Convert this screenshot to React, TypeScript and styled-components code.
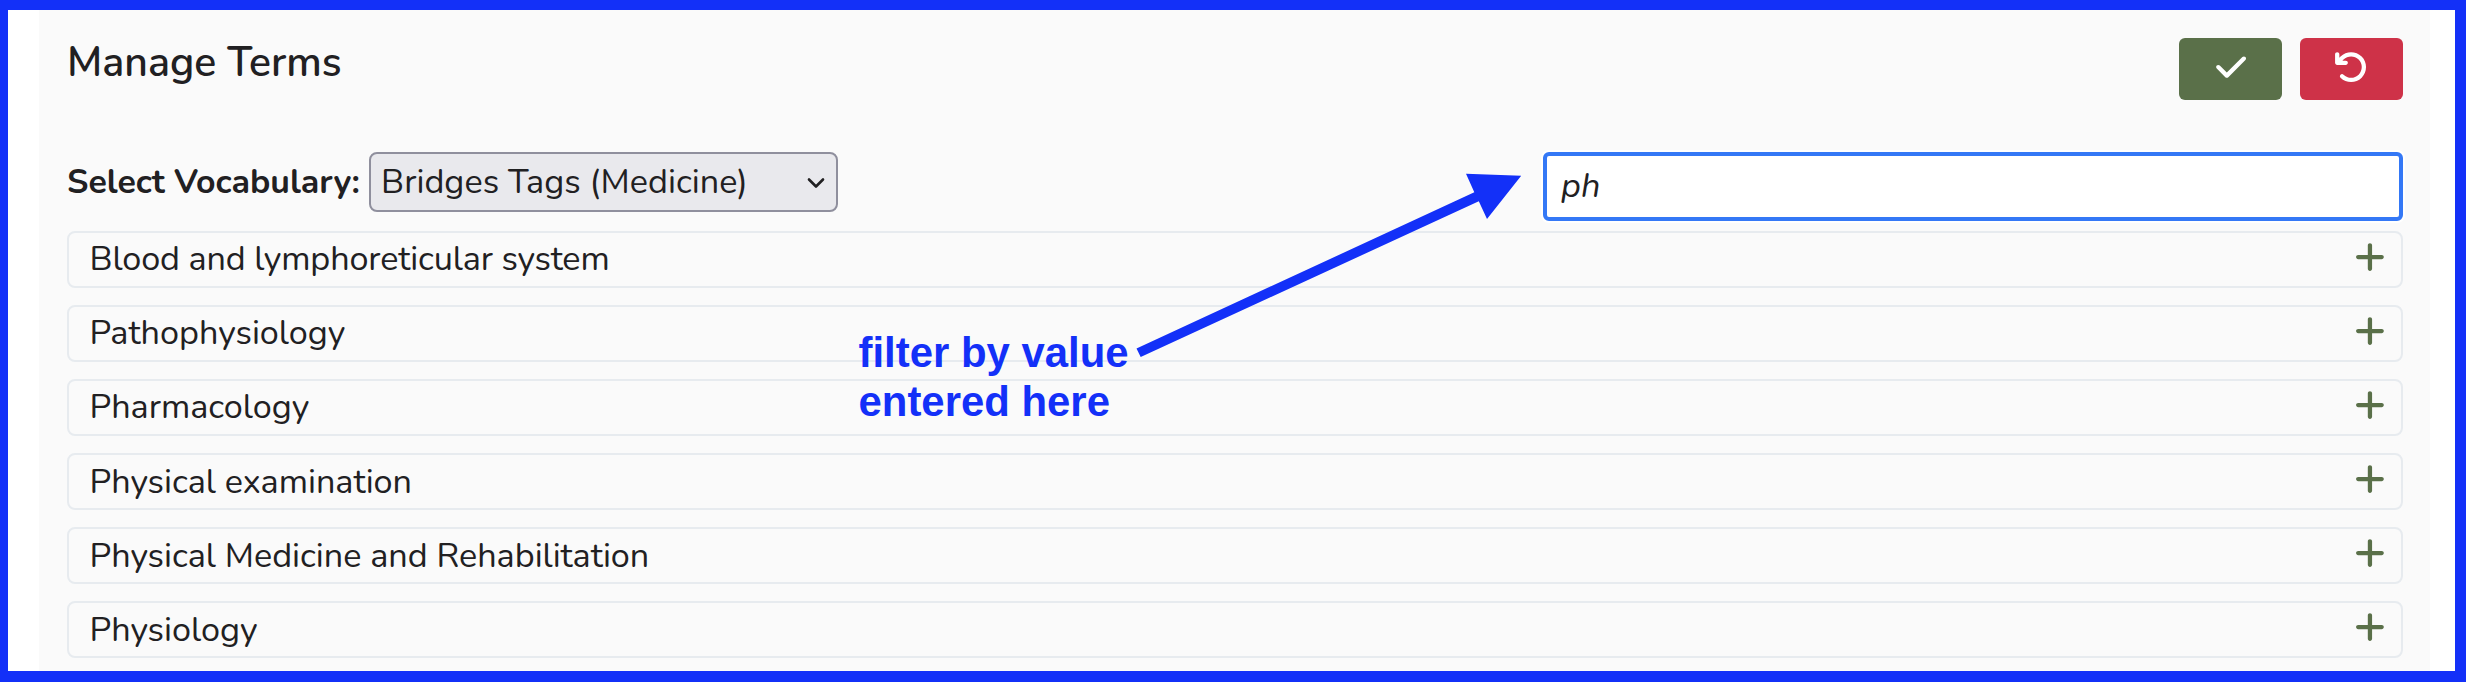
import React, { useState } from "react";
import styled, { createGlobalStyle } from "styled-components";
import { FaArrowRotateLeft, FaCheck, FaPlus } from "react-icons/fa6";

const GlobalStyle = createGlobalStyle`
  *, *::before, *::after { box-sizing: border-box; }
  body {
    margin: 0;
    background: #fff;
    color: #212022;
    font-family: "Nunito", "Lato", "Open Sans", sans-serif;
    font-size: 34.2px;
  }
`;

const Frame = styled.div`
  position: relative;
  height: 682px;
  overflow: hidden;
  border: solid #1330f8;
  border-width: 10px 11px 11px 8px;
  padding: 0 25px 0 31px;
`;

const Panel = styled.main`
  height: 100%;
  padding: 28px 27px 0 28px;
  background: #fafafa;
`;

const Header = styled.header`
  display: flex;
  justify-content: space-between;
  align-items: flex-start;
  height: 114px;
`;

const Title = styled.h1`
  margin: 0;
  padding-top: 1px;
  font-size: 41px;
  font-weight: 600;
  line-height: 48px;
`;

const Actions = styled.div`
  display: flex;
  gap: 18px;
`;

const ActionButton = styled.button<{ $tone: "save" | "undo" }>`
  display: flex;
  align-items: center;
  justify-content: center;
  width: 103px;
  height: 62px;
  padding: ${({ $tone }) => ($tone === "save" ? "0 0 4px 1px" : "0 0 4px")};
  border: 0;
  border-radius: 6px;
  background: ${({ $tone }) => ($tone === "save" ? "#5a7049" : "#ce3248")};
  color: #fff;

  svg {
    width: 34.2px;
    height: 34.2px;
  }
`;

const Filters = styled.div`
  display: flex;
  justify-content: space-between;
  align-items: flex-start;
  height: 79px;
`;

const Vocabulary = styled.label`
  display: flex;
  align-items: center;
  gap: 9px;
  height: 60px;
`;

const LabelText = styled.span`
  width: 293px;
  font-size: 33.9px;
  font-weight: 700;
  line-height: 60px;
  white-space: nowrap;
`;

const SelectBox = styled.span`
  display: grid;
  grid-template-rows: 60px;
  align-items: center;
  width: 469px;

  > * {
    grid-area: 1 / 1;
  }
`;

const Select = styled.select`
  appearance: none;
  width: 100%;
  height: 60px;
  padding: 0 48px 2px 10px;
  border: 2px solid #8f8f9d;
  border-radius: 8px;
  background: #e9e9ed;
  color: inherit;
  font: inherit;
  line-height: normal;
  letter-spacing: 0.04px;
`;

const Chevron = styled.svg`
  justify-self: end;
  width: 18px;
  height: 12px;
  margin: 2px 13px 0 0;
  pointer-events: none;
`;

const FilterInput = styled.input`
  width: 860px;
  height: 69px;
  padding: 0 14px 2px;
  border: 4px solid #3478f6;
  border-radius: 6px;
  outline: 0;
  box-shadow: 0 0 0 2px #fff;
  background: #fff;
  color: inherit;
  font: inherit;
  font-style: italic;
`;

const TermList = styled.ul`
  display: flex;
  flex-direction: column;
  gap: 17px;
  margin: 0;
  padding: 0;
  list-style: none;
`;

const TermName = styled.span<{ $tracking?: number }>`
  padding-top: 2px;
  letter-spacing: ${({ $tracking = 0 }) => $tracking}px;
`;

const Term = styled.li`
  display: flex;
  justify-content: space-between;
  align-items: center;
  height: 57px;
  padding: 0 16px 4px 20.5px;
  border: 2px solid #e7ebef;
  border-radius: 8px;
  line-height: 48px;

  &:nth-child(n + 4) ${TermName} {
    padding-top: 4px;
  }

  svg {
    width: 29.9px;
    height: 34.2px;
    color: #5a7049;
  }
`;

const Note = styled.p`
  position: absolute;
  left: 850.5px;
  top: 318px;
  margin: 0;
  color: #1330f8;
  font: bold 41.9px/49px "Liberation Sans", Arial, sans-serif;
  white-space: pre;
`;

const Arrow = styled.svg`
  position: absolute;
  left: 1122px;
  top: 160px;
  width: 400px;
  height: 200px;
  fill: #1330f8;
  pointer-events: none;
`;

const terms = [
  { name: "Blood and lymphoreticular system", tracking: -0.14 },
  { name: "Pathophysiology" },
  { name: "Pharmacology" },
  { name: "Physical examination" },
  { name: "Physical Medicine and Rehabilitation" },
  { name: "Physiology" },
];

export default function App() {
  const [filter, setFilter] = useState("ph");

  return (
    <>
      <GlobalStyle />
      <Frame>
        <Panel>
          <Header>
            <Title>Manage Terms</Title>
            <Actions>
              <ActionButton $tone="save" aria-label="Save">
                <FaCheck />
              </ActionButton>
              <ActionButton $tone="undo" aria-label="Undo">
                <FaArrowRotateLeft />
              </ActionButton>
            </Actions>
          </Header>
          <Filters>
            <Vocabulary>
              <LabelText>Select Vocabulary:</LabelText>
              <SelectBox>
                <Select defaultValue="medicine">
                  <option value="medicine">Bridges Tags (Medicine)</option>
                </Select>
                <Chevron viewBox="0 0 18 12">
                  <path
                    d="M2 2.5 9 9.5 16 2.5"
                    fill="none"
                    stroke="#212022"
                    strokeWidth="2.6"
                    strokeLinecap="round"
                    strokeLinejoin="round"
                  />
                </Chevron>
              </SelectBox>
            </Vocabulary>
            <FilterInput value={filter} onChange={(e) => setFilter(e.target.value)} />
          </Filters>
          <TermList>
            {terms
              .filter(({ name }) => name.toLowerCase().includes(filter.toLowerCase()))
              .map(({ name, tracking }) => (
                <Term key={name}>
                  <TermName $tracking={tracking}>{name}</TermName>
                  <FaPlus />
                </Term>
              ))}
          </TermList>
        </Panel>
        <Note>{"filter by value\nentered here"}</Note>
        <Arrow viewBox="1130 170 400 200">
          <path d="M1136.5 348.5 L1474.3 192.3 L1466 173.7 L1521.2 175.7 L1487 219 L1478.8 201.3 L1140.7 357 Z" />
        </Arrow>
      </Frame>
    </>
  );
}
